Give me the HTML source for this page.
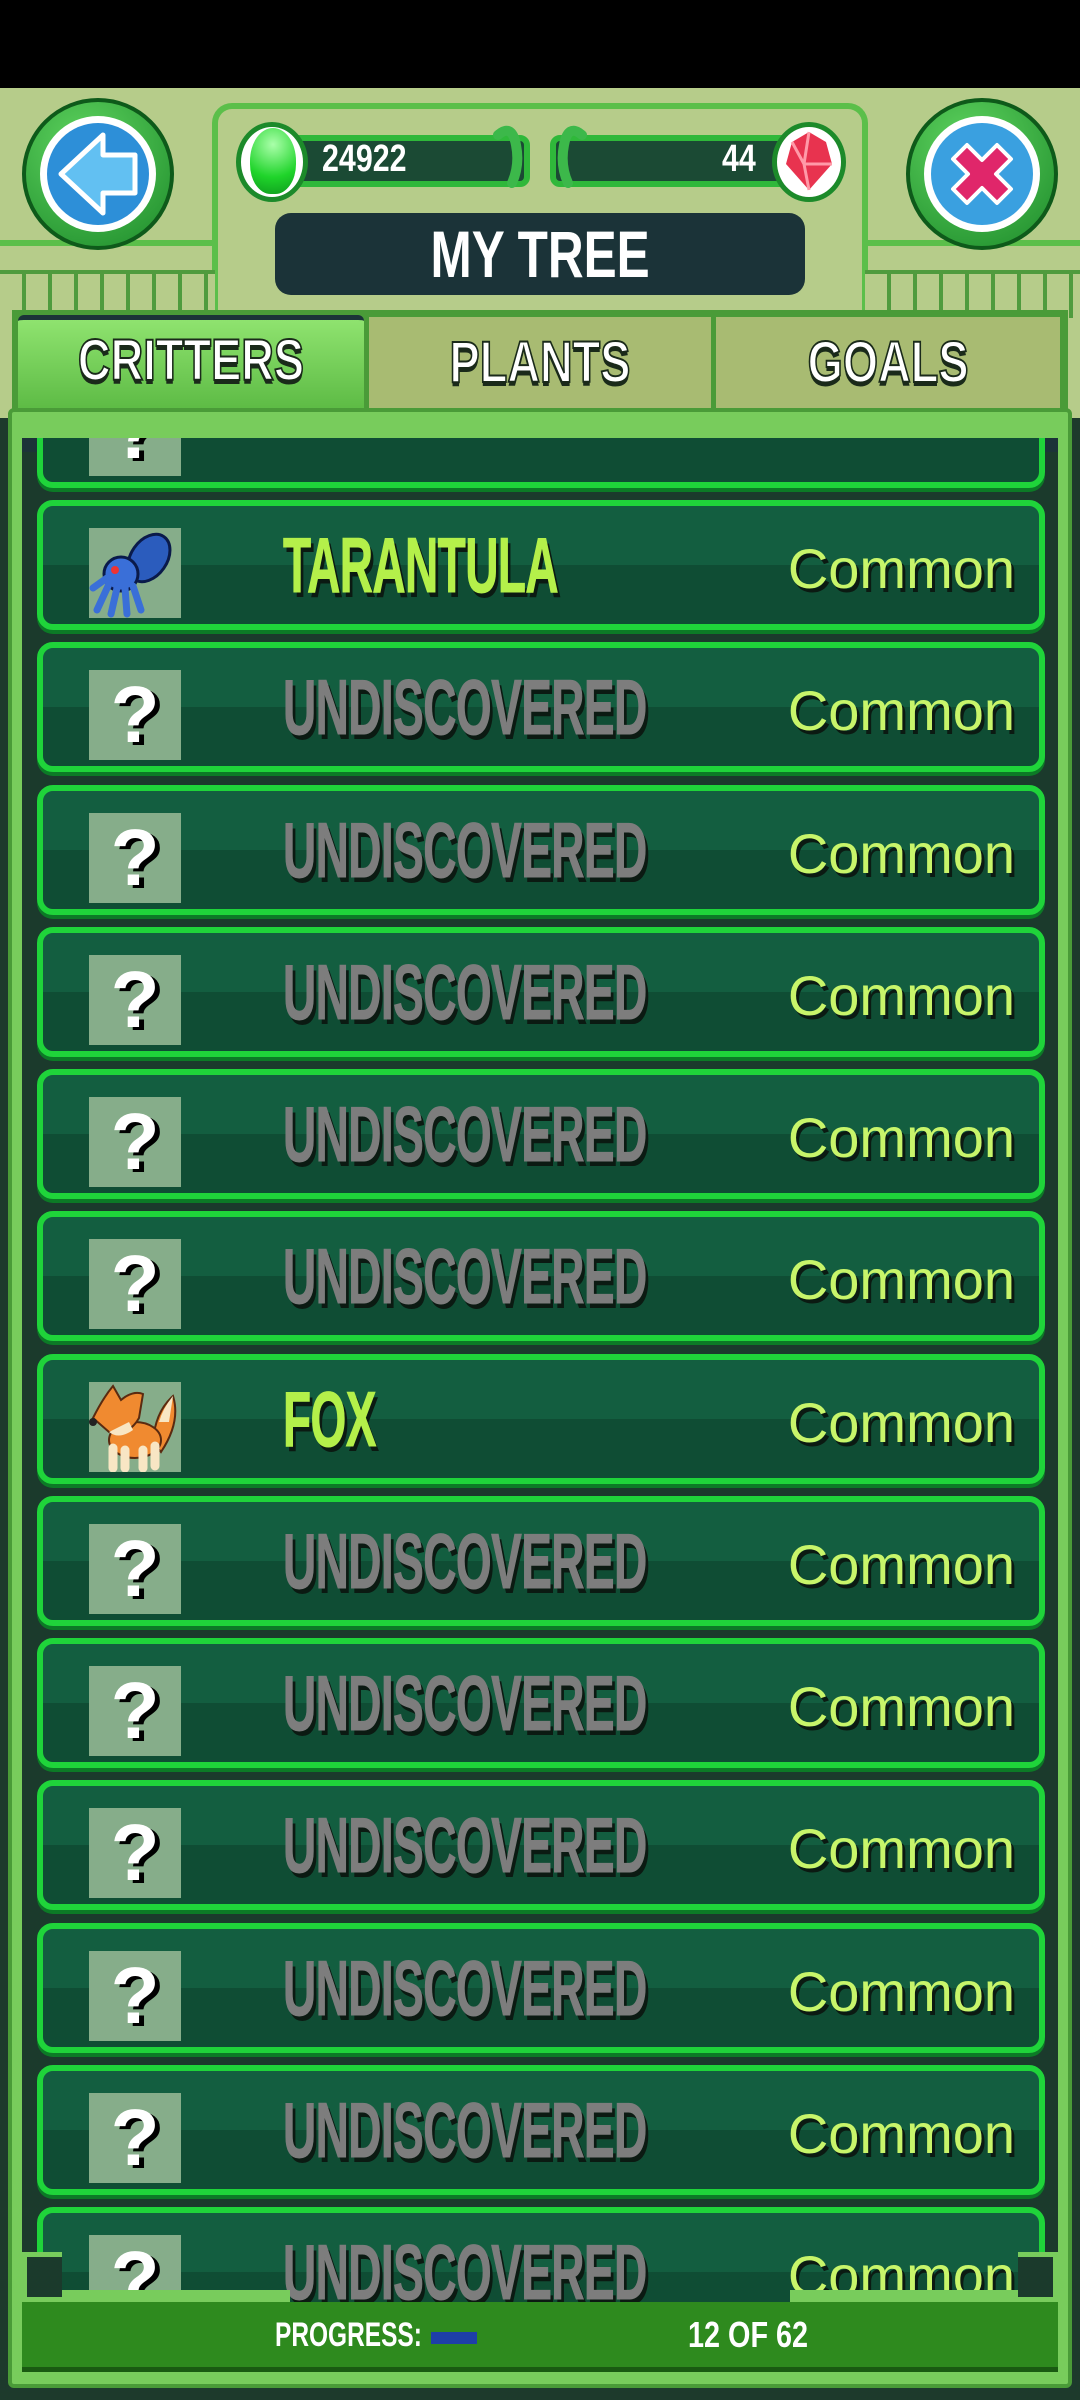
<!DOCTYPE html>
<html><head><meta charset="utf-8"><style>
*{margin:0;padding:0;box-sizing:border-box}
body{width:1080px;height:2400px;background:#1d3a2c;position:relative;overflow:hidden;font-family:"Liberation Sans Narrow","Liberation Sans",sans-serif}
.abs{position:absolute}
.row{position:absolute;left:37px;width:1008px;height:130px;border:6px solid #1fd43a;border-radius:16px;background:linear-gradient(#135e40 0,#135e40 50%,#0f4d34 50%,#0f4d34 100%);box-shadow:0 4px 0 #0c7a26;overflow:hidden}
.row .ic{position:absolute;left:46px;top:22px;width:92px;height:90px;background:#86ad8a}
.row .nm{position:absolute;left:240px;top:14px;font-weight:bold;font-size:78px;letter-spacing:-1px;transform:scaleX(.59);transform-origin:left;text-shadow:5px 5px 0 #0b1a12;white-space:nowrap;-webkit-text-stroke:1px currentColor}
.row .nm.u{color:#7d7d7d}
.row .nm.k{color:#b4f04a}
.row .cm{position:absolute;right:24px;top:30px;font-family:"Liberation Sans",sans-serif;font-size:56px;color:#c8f56a;text-shadow:3px 4px 0 #0b1a12}
.q{position:absolute;left:0;top:0;width:92px;height:90px;text-align:center;font-family:"Liberation Sans",sans-serif;font-weight:bold;font-size:80px;line-height:90px;color:#fff;text-shadow:5px 3px 0 #000}
.tab{position:absolute;top:317px;height:92px;text-align:center;font-weight:bold;font-size:58px;color:#fff;line-height:92px;-webkit-text-stroke:2px #1a2a1a;text-shadow:0 4px 0 #1a2a1a}
.tab span{display:inline-block;transform:scaleX(.78)}
</style></head><body>
<div class="abs" style="left:0;top:0;width:1080px;height:88px;background:#000"></div>
<div class="abs" style="left:0;top:88px;width:1080px;height:330px;background:#b6cc8a"></div>
<div class="abs" style="left:212px;top:103px;width:656px;height:215px;border:6px solid #5bbf4a;border-bottom:none;border-radius:20px 20px 0 0"></div>
<div class="abs" style="left:0;top:240px;width:215px;height:6px;background:#5bbf4a"></div>
<div class="abs" style="left:865px;top:240px;width:215px;height:6px;background:#5bbf4a"></div>
<div class="abs" style="left:0;top:270px;width:215px;height:48px;background:repeating-linear-gradient(90deg,#b6cc8a 0 22px,#4f9b3e 22px 26px);border-top:4px solid #4f9b3e"></div>
<div class="abs" style="left:865px;top:270px;width:215px;height:48px;background:repeating-linear-gradient(90deg,#b6cc8a 0 22px,#4f9b3e 22px 26px);border-top:4px solid #4f9b3e"></div>
<div class="abs" style="left:22px;top:98px;width:152px;height:152px;border-radius:50%;background:radial-gradient(circle at 40% 30%,#5fd45f,#1c8a2a);border:4px solid #0e5a1a"></div>
<div class="abs" style="left:40px;top:116px;width:116px;height:116px;border-radius:50%;background:#fff"></div>
<div class="abs" style="left:47px;top:123px;width:102px;height:102px;border-radius:50%;background:#2d8fd8"></div>
<svg class="abs" style="left:47px;top:123px" width="102" height="102" viewBox="0 0 102 102"><path d="M14 51 L56 12 L56 32 L88 32 L88 70 L56 70 L56 90 Z" fill="#62c0f2" stroke="#fff" stroke-width="5" stroke-linejoin="round"/></svg>
<div class="abs" style="left:906px;top:98px;width:152px;height:152px;border-radius:50%;background:radial-gradient(circle at 40% 30%,#5fd45f,#1c8a2a);border:4px solid #0e5a1a"></div>
<div class="abs" style="left:924px;top:116px;width:116px;height:116px;border-radius:50%;background:#fff"></div>
<div class="abs" style="left:931px;top:123px;width:102px;height:102px;border-radius:50%;background:#3aa0e0"></div>
<svg class="abs" style="left:931px;top:123px" width="102" height="102" viewBox="0 0 102 102"><path d="M22 36 L36 22 L51 37 L66 22 L80 36 L65 51 L80 66 L66 80 L51 65 L36 80 L22 66 L37 51 Z" fill="#e0266a" stroke="#fff" stroke-width="4" stroke-linejoin="round"/></svg>
<div class="abs" style="left:262px;top:135px;width:268px;height:52px;border-radius:10px;background:#1b4a34;border:6px solid #2fb83a"></div>
<div class="abs" style="left:550px;top:135px;width:268px;height:52px;border-radius:10px;background:#1b4a34;border:6px solid #2fb83a"></div>
<div class="abs" style="left:236px;top:122px;width:72px;height:80px;border-radius:50%;background:#fff;border:5px solid #1c8a2a"></div>
<div class="abs" style="left:250px;top:128px;width:46px;height:66px;border-radius:50% 50% 45% 45%;background:radial-gradient(circle at 50% 25%,#aaffaa,#1fd42a 60%,#0e9a1e)"></div>
<div class="abs" style="left:322px;top:138px;font-weight:bold;font-size:38px;color:#fff;transform:scaleX(.8);transform-origin:left">24922</div>
<div class="abs" style="left:722px;top:138px;font-weight:bold;font-size:38px;color:#fff;transform:scaleX(.8);transform-origin:left">44</div>
<div class="abs" style="left:772px;top:122px;width:74px;height:80px;border-radius:50%;background:#fff;border:5px solid #1c8a2a"></div>
<svg class="abs" style="left:780px;top:128px" width="58" height="66" viewBox="0 0 58 66"><path d="M29 4 L46 14 L52 36 L29 62 L6 36 L12 14 Z" fill="#e8334f"/><path d="M29 4 L24 36 L29 62 M12 14 L24 36 L52 36" stroke="#ff9aa8" stroke-width="3" fill="none"/></svg>
<svg class="abs" style="left:490px;top:125px" width="100" height="70" viewBox="0 0 100 70"><path d="M8 10 Q22 -2 26 20 Q30 40 22 58 M92 10 Q78 -2 74 20 Q70 40 78 58" stroke="#3cb84a" stroke-width="10" fill="none" stroke-linecap="round"/></svg>
<div class="abs" style="left:275px;top:213px;width:530px;height:82px;border-radius:16px;background:#1b3338;text-align:center;line-height:82px;font-weight:bold;font-size:66px;color:#fff"><span style="display:inline-block;transform:scaleX(.75)">MY TREE</span></div>
<div class="abs" style="left:12px;top:310px;width:1056px;height:100px;background:#4a9b38"></div>
<div class="tab" style="left:18px;width:346px;background:linear-gradient(#8fe36f,#5cba44);border-top:5px solid #1b3338;border-radius:6px 6px 0 0;top:315px;height:96px;line-height:82px"><span>CRITTERS</span></div>
<div class="tab" style="left:369px;width:342px;background:#a8bb72"><span>PLANTS</span></div>
<div class="tab" style="left:716px;width:344px;background:#a8bb72"><span>GOALS</span></div>
<div class="abs" style="left:8px;top:408px;width:1064px;height:1980px;background:#78cc5c;border-radius:6px;border:4px solid #4a9b38"></div>
<div class="abs" style="left:22px;top:438px;width:1036px;height:1870px;background:#1b3a2c;overflow:hidden">
<div style="position:absolute;left:0;top:0;width:100%;height:14px;background:#1b3338"></div>
<div style="position:absolute;left:-22px;top:-438px;width:1080px;height:2400px">
<div class="row" style="top:358px"><div class="ic"><div class="q">?</div></div></div>
<div class="row" style="top:500px"><div class="ic"><svg width="92" height="90" viewBox="0 0 92 90"><ellipse cx="60" cy="30" rx="18" ry="26" transform="rotate(35 60 30)" fill="#2b5cbd" stroke="#0a1a4a" stroke-width="3"/><circle cx="32" cy="46" r="17" fill="#3a6fd8" stroke="#0a1a4a" stroke-width="3"/><path d="M20 56 L8 82 M28 60 L22 86 M36 60 L38 86 M44 58 L52 82 M18 50 L4 60" stroke="#3a6fd8" stroke-width="7" stroke-linecap="round"/><circle cx="26" cy="42" r="4" fill="#e33"/></svg></div><div class="nm k">TARANTULA</div><div class="cm">Common</div></div>
<div class="row" style="top:642px"><div class="ic"><div class="q">?</div></div><div class="nm u">UNDISCOVERED</div><div class="cm">Common</div></div>
<div class="row" style="top:785px"><div class="ic"><div class="q">?</div></div><div class="nm u">UNDISCOVERED</div><div class="cm">Common</div></div>
<div class="row" style="top:927px"><div class="ic"><div class="q">?</div></div><div class="nm u">UNDISCOVERED</div><div class="cm">Common</div></div>
<div class="row" style="top:1069px"><div class="ic"><div class="q">?</div></div><div class="nm u">UNDISCOVERED</div><div class="cm">Common</div></div>
<div class="row" style="top:1211px"><div class="ic"><div class="q">?</div></div><div class="nm u">UNDISCOVERED</div><div class="cm">Common</div></div>
<div class="row" style="top:1354px"><div class="ic"><svg width="92" height="90" viewBox="0 0 92 90"><path d="M72 70 Q92 40 84 14 Q66 30 64 60 Z" fill="#f08a30" stroke="#5a2a10" stroke-width="2"/><path d="M84 14 Q74 26 70 40 L80 40 Z" fill="#f8e6c4"/><ellipse cx="46" cy="58" rx="26" ry="18" fill="#f08a30" stroke="#5a2a10" stroke-width="2"/><path d="M24 66 L24 86 M36 68 L36 86 M54 68 L54 86 M66 64 L66 84" stroke="#f8e6c4" stroke-width="9" stroke-linecap="round"/><path d="M4 36 Q14 16 24 4 L32 18 Q44 8 54 12 L50 36 Q40 54 20 50 Z" fill="#f08a30" stroke="#5a2a10" stroke-width="2"/><circle cx="4" cy="40" r="4" fill="#222"/><path d="M20 50 Q30 58 44 48 L40 40 Z" fill="#f8e6c4"/></svg></div><div class="nm k">FOX</div><div class="cm">Common</div></div>
<div class="row" style="top:1496px"><div class="ic"><div class="q">?</div></div><div class="nm u">UNDISCOVERED</div><div class="cm">Common</div></div>
<div class="row" style="top:1638px"><div class="ic"><div class="q">?</div></div><div class="nm u">UNDISCOVERED</div><div class="cm">Common</div></div>
<div class="row" style="top:1780px"><div class="ic"><div class="q">?</div></div><div class="nm u">UNDISCOVERED</div><div class="cm">Common</div></div>
<div class="row" style="top:1923px"><div class="ic"><div class="q">?</div></div><div class="nm u">UNDISCOVERED</div><div class="cm">Common</div></div>
<div class="row" style="top:2065px"><div class="ic"><div class="q">?</div></div><div class="nm u">UNDISCOVERED</div><div class="cm">Common</div></div>
<div class="row" style="top:2207px"><div class="ic"><div class="q">?</div></div><div class="nm u">UNDISCOVERED</div><div class="cm">Common</div></div>
</div>
</div>
<div class="abs" style="left:22px;top:2290px;width:268px;height:14px;background:#78cc5c"></div>
<div class="abs" style="left:790px;top:2290px;width:268px;height:14px;background:#78cc5c"></div>
<div class="abs" style="left:22px;top:2252px;width:40px;height:50px;border:5px solid #78cc5c;border-right:none;background:#1b3a2c"></div>
<div class="abs" style="left:1018px;top:2252px;width:40px;height:50px;border:5px solid #78cc5c;border-left:none;background:#1b3a2c"></div>
<div class="abs" style="left:22px;top:2302px;width:1036px;height:70px;background:#2e8a1e;border-bottom:5px solid #1a5a12"></div>
<div class="abs" style="left:275px;top:2316px;font-weight:bold;font-size:34px;color:#fff;transform:scaleX(.72);transform-origin:left">PROGRESS:</div>
<div class="abs" style="left:431px;top:2332px;width:46px;height:12px;background:#1e3fa8"></div>
<div class="abs" style="left:688px;top:2314px;font-weight:bold;font-size:36px;color:#fff;transform:scaleX(.8);transform-origin:left">12 OF 62</div>
</body></html>
